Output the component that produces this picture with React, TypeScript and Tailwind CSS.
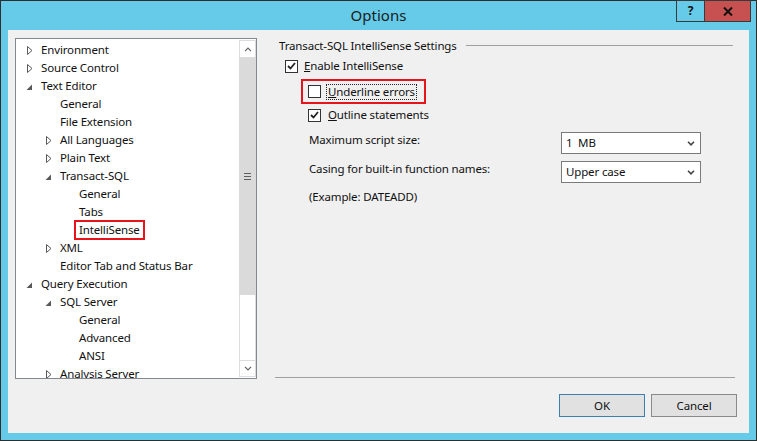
import React from "react";

type Node = { label: string; level: 0 | 1 | 2; arrow?: "open" | "closed"; selected?: boolean };

const tree: Node[] = [
  { label: "Environment", level: 0, arrow: "closed" },
  { label: "Source Control", level: 0, arrow: "closed" },
  { label: "Text Editor", level: 0, arrow: "open" },
  { label: "General", level: 1 },
  { label: "File Extension", level: 1 },
  { label: "All Languages", level: 1, arrow: "closed" },
  { label: "Plain Text", level: 1, arrow: "closed" },
  { label: "Transact-SQL", level: 1, arrow: "open" },
  { label: "General", level: 2 },
  { label: "Tabs", level: 2 },
  { label: "IntelliSense", level: 2, selected: true },
  { label: "XML", level: 1, arrow: "closed" },
  { label: "Editor Tab and Status Bar", level: 1 },
  { label: "Query Execution", level: 0, arrow: "open" },
  { label: "SQL Server", level: 1, arrow: "open" },
  { label: "General", level: 2 },
  { label: "Advanced", level: 2 },
  { label: "ANSI", level: 2 },
  { label: "Analysis Server", level: 1, arrow: "closed" },
];

const indent = ["pl-[8px]", "pl-[27px]", "pl-[46px]"];

const Arrow = ({ kind }: { kind?: "open" | "closed" }) => {
  if (kind === "closed")
    return (
      <svg width="6" height="9" viewBox="0 0 6 9" className="ml-[3px]">
        <path d="M0.5 0.5 L5 4.5 L0.5 8.5 Z" fill="none" stroke="#595959" strokeWidth="1" />
      </svg>
    );
  if (kind === "open")
    return (
      <svg width="7" height="7" viewBox="0 0 7 7" className="ml-[2px] mt-[2px]">
        <path d="M6 0.5 L6 6 L0.5 6 Z" fill="#595959" />
      </svg>
    );
  return null;
};

const Check = ({ checked }: { checked?: boolean }) => (
  <span className="w-[13px] h-[13px] border border-[#333333] bg-white flex items-center justify-center shrink-0">
    {checked && (
      <svg width="9" height="8" viewBox="0 0 9 8">
        <path d="M1 4 L3.5 6.5 L8 1" fill="none" stroke="#222" strokeWidth="1.8" />
      </svg>
    )}
  </span>
);

const Chevron = () => (
  <svg width="8" height="5" viewBox="0 0 8 5">
    <path d="M1 0.8 L4 3.8 L7 0.8" fill="none" stroke="#444" strokeWidth="1.6" />
  </svg>
);

const Dropdown = ({ value }: { value: string }) => (
  <div className="w-[140px] h-[22px] border border-[#7a7a7a] bg-white flex items-center pl-[4px] pr-[5px]">
    <span className="flex-1 whitespace-pre">{value}</span>
    <Chevron />
  </div>
);

export default function App() {
  return (
    <div
      className="w-[757px] h-[441px] bg-[#65cbe9] border border-[#2e2e2e] flex flex-col text-[11.5px] tracking-[-0.15px] text-[#111]"
      style={{ fontFamily: '"Noto Sans", "Open Sans", sans-serif' }}
    >
      {/* title bar */}
      <div className="relative h-[29px] shrink-0 flex items-center justify-center tracking-normal">
        <span className="text-[15px] text-[#1b1b1b] -mt-[1px]">Options</span>
        <div className="absolute -top-px right-[5px] flex">
          <div className="w-[29px] h-[22px] border border-[#3a3a3a] flex items-center justify-center text-[12px] font-bold text-[#111]">
            ?
          </div>
          <div className="w-[46px] h-[22px] border border-l-0 border-[#3a3a3a] bg-[#c75050] flex items-center justify-center">
            <svg width="10" height="9" viewBox="0 0 10 9">
              <path d="M1 0.5 L9 8.5 M9 0.5 L1 8.5" stroke="#111" strokeWidth="2" />
            </svg>
          </div>
        </div>
      </div>

      {/* client */}
      <div className="flex-1 mx-[7px] mb-[7px] bg-[#f0f0f0] flex flex-col">
        <div className="flex h-[349px]">
          {/* tree */}
          <div className="ml-[7px] mt-[8px] w-[242px] h-[341px] border border-[#828790] bg-white flex shrink-0">
            <div className="flex-1 overflow-hidden pt-[2px]">
              {tree.map((n, i) => (
                <div key={i} className={`h-[18px] flex items-center whitespace-nowrap ${indent[n.level]}`}>
                  <span className="w-[17px] shrink-0 flex items-center">
                    <Arrow kind={n.arrow} />
                  </span>
                  {n.selected ? (
                    <span className="-ml-[5px] h-[20px] border-2 border-[#e8141b] px-[3px] flex items-center">
                      {n.label}
                    </span>
                  ) : (
                    <span>{n.label}</span>
                  )}
                </div>
              ))}
            </div>
            <div className="w-[17px] flex flex-col bg-white pt-[1px]">
              <div className="h-[18px] border border-[#dcdcdc] flex items-center justify-center">
                <svg width="8" height="5" viewBox="0 0 8 5">
                  <path d="M1 4.2 L4 1.2 L7 4.2" fill="none" stroke="#606060" strokeWidth="1.2" />
                </svg>
              </div>
              <div className="h-[237px] bg-[#dadada] flex flex-col items-center justify-center gap-[2px]">
                <span className="w-[7px] h-px bg-[#5e5e5e]" />
                <span className="w-[7px] h-px bg-[#5e5e5e]" />
                <span className="w-[7px] h-px bg-[#5e5e5e]" />
              </div>
              <div className="flex-1 border-x border-[#dcdcdc]" />
              <div className="h-[17px] border border-[#dcdcdc] flex items-center justify-center mb-[1px]">
                <svg width="8" height="5" viewBox="0 0 8 5">
                  <path d="M1 0.8 L4 3.8 L7 0.8" fill="none" stroke="#606060" strokeWidth="1.2" />
                </svg>
              </div>
            </div>
          </div>

          {/* settings */}
          <div className="flex-1 ml-[18px] mr-[14px] flex flex-col">
            <div className="mt-[7px] h-[17px] pl-[4px] flex items-center">
              <span className="whitespace-nowrap">Transact-SQL IntelliSense Settings</span>
              <span className="flex-1 h-px bg-[#a0a0a0] ml-[9px] mr-[2px]" />
            </div>

            <div className="mt-[4px] h-[16px] pl-[10px] flex items-center gap-[6px]">
              <Check checked />
              <span>
                <u>E</u>nable IntelliSense
              </span>
            </div>

            <div className="mt-[5px] ml-[26px] w-[125px] h-[25px] border-2 border-[#e8141b] flex items-center pl-[5px]">
              <Check />
              <span className="ml-[5px] px-[1px] leading-[14px] border border-dotted border-[#222]">
                <u>U</u>nderline errors
              </span>
            </div>

            <div className="mt-[3px] h-[16px] pl-[33px] flex items-center gap-[7px]">
              <Check checked />
              <span>
                <u>O</u>utline statements
              </span>
            </div>

            <div className="mt-[9px] pl-[34px] flex items-start">
              <span className="w-[252px] h-[16px] leading-[16px]">Maximum script size:</span>
              <Dropdown value="1  MB" />
            </div>

            <div className="mt-[7px] pl-[34px] flex items-start">
              <span className="w-[252px] h-[16px] leading-[16px]">Casing for built-in function names:</span>
              <Dropdown value="Upper case" />
            </div>

            <div className="mt-[6px] h-[16px] pl-[34px] flex items-center">(Example: DATEADD)</div>

            <div className="flex-1" />
            <div className="h-px bg-[#a0a0a0] mb-px" />
          </div>
        </div>

        {/* footer buttons */}
        <div className="mt-[15px] flex justify-end gap-[6px] pr-[12px]">
          <button className="w-[86px] h-[23px] border border-[#3c7fb1] bg-[#e1e1e1]">OK</button>
          <button className="w-[86px] h-[23px] border border-[#8a8a8a] bg-[#e1e1e1]">Cancel</button>
        </div>
      </div>
    </div>
  );
}
